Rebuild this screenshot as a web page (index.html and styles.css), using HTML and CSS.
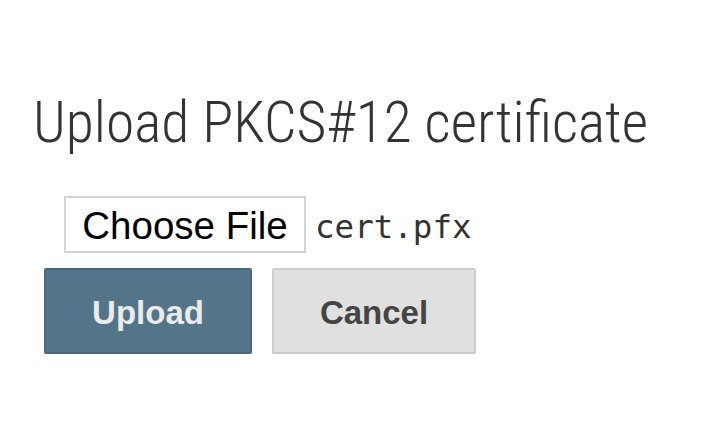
FILE: index.html
```html
<!DOCTYPE html>
<html>
<head>
<meta charset="utf-8">
<link rel="stylesheet" href="styles.css">
</head>
<body>
<main class="page">
  <h1 class="title">Upload PKCS#12 certificate</h1>
  <div class="file-row">
    <span class="file-btn">Choose File</span>
    <span class="file-name">cert.pfx</span>
  </div>
  <div class="actions">
    <button class="btn btn-primary">Upload</button>
    <button class="btn btn-secondary">Cancel</button>
  </div>
</main>
</body>
</html>
```
FILE: styles.css
```css
html, body {
  margin: 0;
  padding: 0;
  background: #ffffff;
}
.page {
  padding: 88px 0 0 33px;
}
.title {
  margin: 0;
  font-family: "Roboto", sans-serif;
  font-stretch: 75%;
  font-weight: 300;
  font-size: 57.5px;
  line-height: 70px;
  white-space: nowrap;
  color: #333333;
}
.file-row {
  display: flex;
  align-items: center;
  gap: 9px;
  margin: 38px 0 0 31px;
}
.file-btn {
  box-sizing: border-box;
  width: 242px;
  height: 57px;
  padding-top: 3px;
  border: 2px solid #d4d4d4;
  display: flex;
  align-items: center;
  justify-content: center;
  font-family: "Liberation Sans", Arial, sans-serif;
  font-size: 38.5px;
  color: #000;
}
.file-name {
  padding-top: 4px;
  font-family: "DejaVu Sans Mono", monospace;
  font-size: 32.5px;
  color: #333;
}
.actions {
  display: flex;
  gap: 20px;
  margin: 15px 0 0 11px;
}
.btn {
  box-sizing: border-box;
  height: 86px;
  padding: 4px 0 0;
  font-family: "Liberation Sans", Arial, sans-serif;
  font-weight: bold;
  font-size: 33px;
  border-radius: 2px;
}
.btn-primary {
  width: 208px;
  background: #537489;
  border: 2px solid #4a6a7f;
  color: #ebebeb;
}
.btn-secondary {
  width: 204px;
  background: #e0e0e0;
  border: 2px solid #cccccc;
  color: #444444;
}
```
